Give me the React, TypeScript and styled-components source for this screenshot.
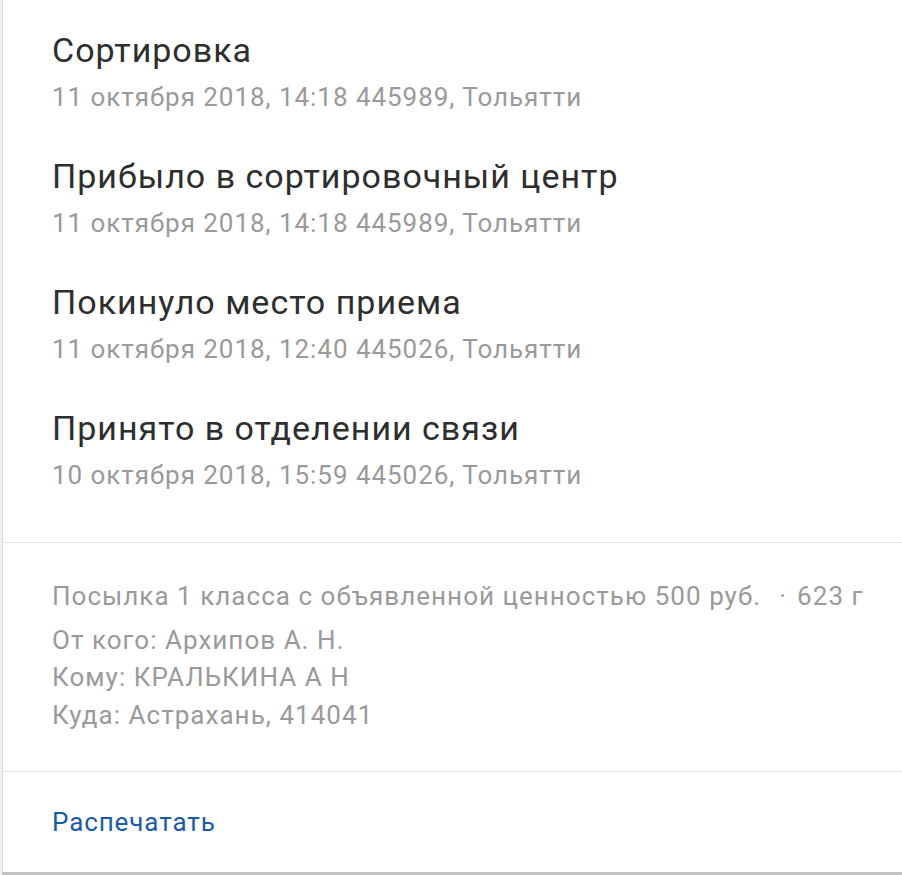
import React from "react";
import styled, { createGlobalStyle } from "styled-components";

const GlobalStyle = createGlobalStyle`
  html, body {
    margin: 0;
    padding: 0;
    background: #f2f2f2;
  }
  body {
    font-family: Roboto, "Noto Sans", "Liberation Sans", sans-serif;
    overflow: hidden;
  }
`;

interface IEvent {
  title: string;
  details: string;
}

const events: IEvent[] = [
  { title: "Сортировка", details: "11 октября 2018, 14:18 445989, Тольятти" },
  {
    title: "Прибыло в сортировочный центр",
    details: "11 октября 2018, 14:18 445989, Тольятти",
  },
  {
    title: "Покинуло место приема",
    details: "11 октября 2018, 12:40 445026, Тольятти",
  },
  {
    title: "Принято в отделении связи",
    details: "10 октября 2018, 15:59 445026, Тольятти",
  },
];

const SCard = styled.div`
  box-sizing: border-box;
  margin-left: 2px;
  width: calc(100% + 10px);
  height: 875px;
  background: #fff;
  border-left: 1px solid #d9d9d9;
  border-bottom: 3px solid #c2c2c2;
  display: flex;
  flex-direction: column;
`;

const SSection = styled.section<{ $top: number; $bottom: number }>`
  padding: ${(p) => p.$top}px 49px ${(p) => p.$bottom}px;
  border-bottom: 1px solid #e2e2e2;

  &:last-child {
    border-bottom: none;
  }
`;

const STimeline = styled.div`
  display: flex;
  flex-direction: column;
  gap: 42px;
`;

const SEvent = styled.div`
  display: flex;
  flex-direction: column;
`;

const STitle = styled.div`
  font-size: 34px;
  line-height: 40px;
  letter-spacing: 1px;
  color: #2e2e2e;
`;

const SDetails = styled.div`
  margin-top: 10px;
  font-size: 26px;
  line-height: 34px;
  letter-spacing: 0.95px;
  color: #9a9a9a;
`;

const SInfoLine = styled.div<{ $gap?: number }>`
  font-size: 26px;
  line-height: 37.5px;
  letter-spacing: 1.03px;
  color: #9a9a9a;
  margin-bottom: ${(p) => p.$gap || 0}px;
`;

const SDot = styled.span`
  margin: 0 10px 0 18px;
`;

const SLink = styled.a`
  font-size: 26px;
  line-height: 36px;
  letter-spacing: 0.9px;
  color: #1b5ba5;
  text-decoration: none;
  cursor: pointer;
`;

export default function App() {
  return (
    <>
      <GlobalStyle />
      <SCard>
        <SSection $top={30} $bottom={50}>
          <STimeline>
            {events.map((e, i) => (
              <SEvent key={i}>
                <STitle>{e.title}</STitle>
                <SDetails>{e.details}</SDetails>
              </SEvent>
            ))}
          </STimeline>
        </SSection>
        <SSection $top={35} $bottom={37}>
          <SInfoLine $gap={6}>
            Посылка 1 класса с объявленной ценностью 500 руб.
            <SDot>·</SDot>623 г
          </SInfoLine>
          <SInfoLine>От кого: Архипов А. Н.</SInfoLine>
          <SInfoLine>Кому: КРАЛЬКИНА А Н</SInfoLine>
          <SInfoLine>Куда: Астрахань, 414041</SInfoLine>
        </SSection>
        <SSection $top={32} $bottom={32}>
          <SLink>Распечатать</SLink>
        </SSection>
      </SCard>
    </>
  );
}
